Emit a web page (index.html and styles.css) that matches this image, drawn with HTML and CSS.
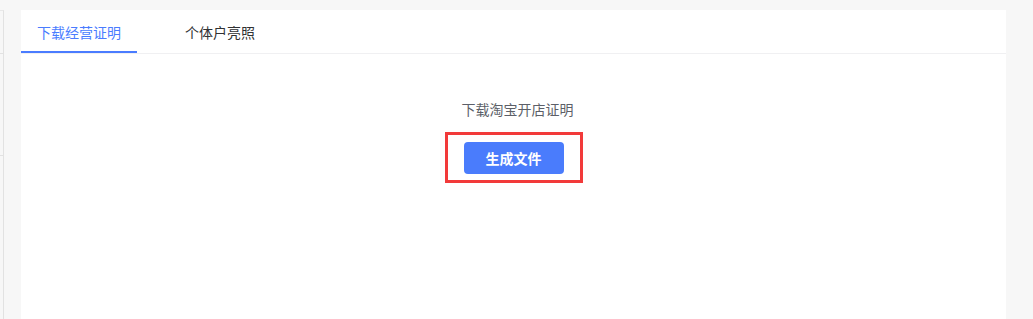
FILE: index.html
```html
<!DOCTYPE html>
<html lang="zh">
<head>
<meta charset="utf-8">
<link rel="stylesheet" href="styles.css">
</head>
<body>
<div class="page">
  <div class="side">
    <div class="side-item"></div>
    <div class="side-item"></div>
  </div>
  <div class="panel">
    <div class="tabs">
      <div class="tab active">下载经营证明</div>
      <div class="tab">个体户亮照</div>
    </div>
    <div class="content">
      <div class="title">下载淘宝开店证明</div>
      <div class="highlight">
        <button class="btn">生成文件</button>
      </div>
    </div>
  </div>
</div>
</body>
</html>
```
FILE: styles.css
```css
html, body {
  margin: 0;
  padding: 0;
  background: #f7f7f7;
  font-family: "Noto Sans CJK SC", "Noto Sans", sans-serif;
  font-size: 14px;
}
.page {
  display: flex;
  height: 319px;
  padding-top: 10px;
  box-sizing: border-box;
  overflow: hidden;
}
.side {
  width: 4px;
  border-right: 1px solid #e2e2e2;
  border-top: 1px solid #e8e8e8;
  box-sizing: border-box;
  display: flex;
  flex-direction: column;
}
.side-item {
  height: 102px;
  flex: none;
  border-bottom: 1px solid #e2e2e2;
  box-sizing: border-box;
}
.side-item:first-child {
  height: 43px;
}
.panel {
  margin-left: 17px;
  width: 985px;
  background: #fff;
  display: flex;
  flex-direction: column;
}
.tabs {
  display: flex;
  height: 44px;
  border-bottom: 1px solid #f0f0f2;
  box-sizing: border-box;
}
.tab {
  padding: 0 16px;
  height: 43px;
  line-height: 44px;
  color: #303133;
  box-sizing: border-box;
  margin-right: 32px;
}
.tab.active {
  color: #4a7cff;
  width: 116px;
  border-bottom: 2px solid #4a7cff;
}
.content {
  display: flex;
  flex-direction: column;
  align-items: center;
  padding-top: 44px;
}
.title {
  color: #5c5f68;
  line-height: 22px;
  height: 22px;
  padding-left: 8px;
}
.highlight {
  margin-top: 12px;
  border: 3px solid #f23a3a;
  padding: 7px 16px 6px 16px;
}
.btn {
  width: 100px;
  height: 32px;
  border: none;
  border-radius: 4px;
  background: #4a7cfc;
  color: #fff;
  font-family: inherit;
  font-size: 14px;
  font-weight: bold;
  padding: 0;
  display: block;
}
```
